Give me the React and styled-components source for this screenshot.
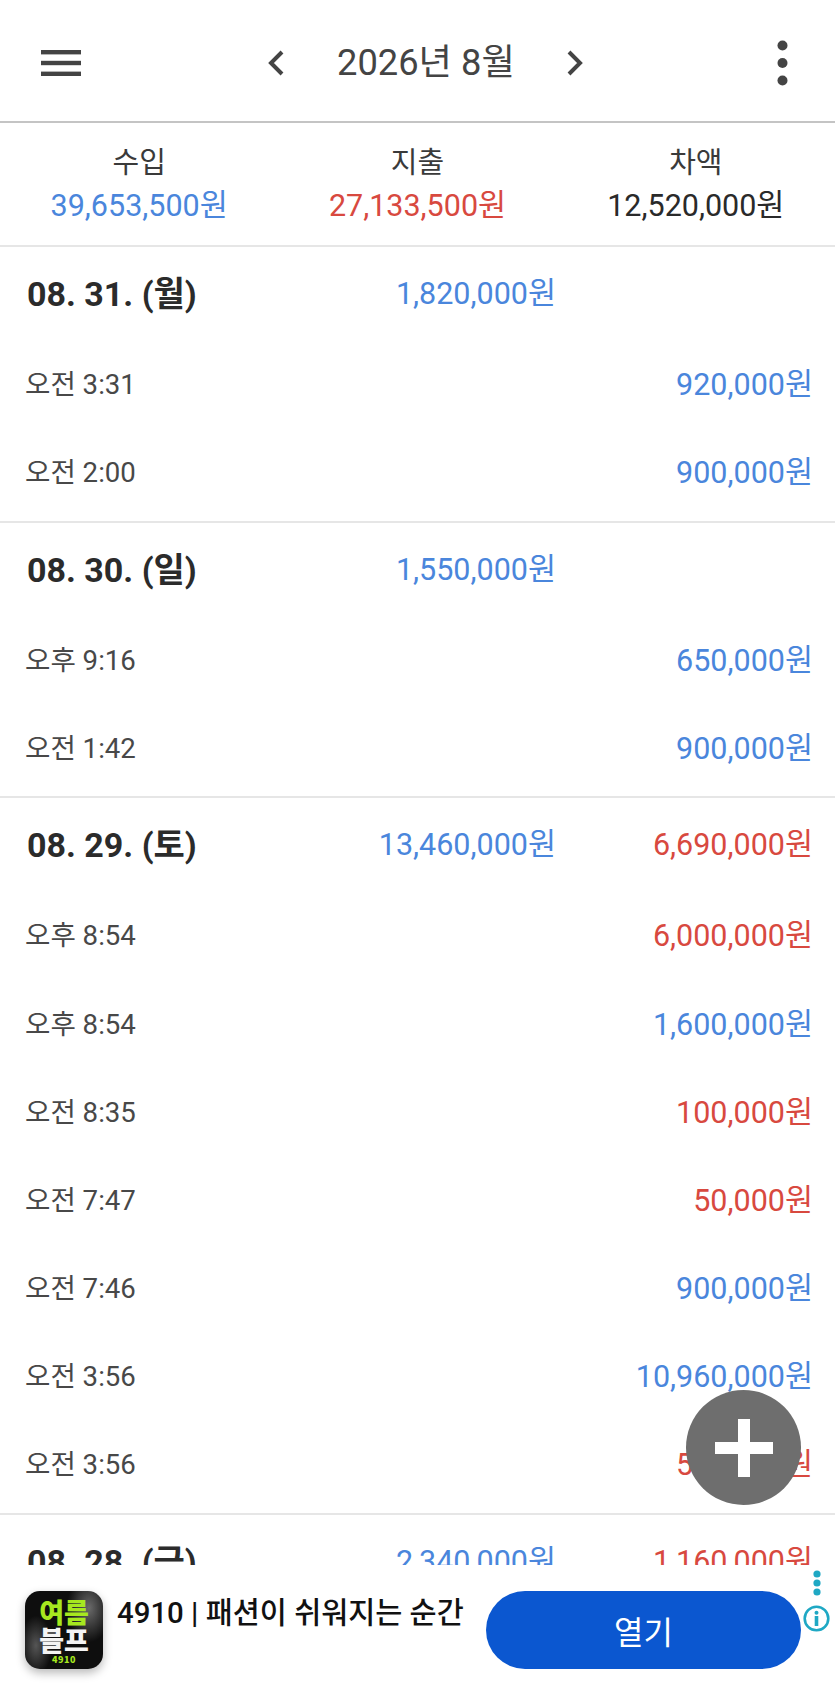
import React from 'react';
import styled, { createGlobalStyle } from 'styled-components';

const GlobalStyle = createGlobalStyle`
  html, body {
    margin: 0;
    padding: 0;
    background: #fff;
  }
  * {
    box-sizing: border-box;
  }
`;

const Screen = styled.div`
  position: relative;
  width: 835px;
  height: 1696px;
  display: flex;
  flex-direction: column;
  overflow: hidden;
  background: #fff;
  font-family: Roboto, "Noto Sans CJK KR", sans-serif;
`;

const Header = styled.header`
  flex: 0 0 123px;
  display: flex;
  align-items: center;
  justify-content: space-between;
  padding: 4px 47px 0 41px;
  border-bottom: 2px solid #c4c4c4;
`;

const IconBtn = styled.button`
  display: flex;
  padding: 0;
  border: none;
  background: none;
`;

const MonthNav = styled.div`
  display: flex;
  align-items: center;
  gap: 52px;
  margin-right: 7px;
`;

const MonthTitle = styled.div`
  width: 177px;
  font-size: 36.3px;
  line-height: 40px;
  color: #444;
  white-space: nowrap;
  text-align: center;
`;

const Summary = styled.section`
  flex: 0 0 124px;
  display: grid;
  grid-template-columns: repeat(3, 1fr);
  padding-top: 20px;
  border-bottom: 2px solid #e6e6e6;
`;

const SummaryCol = styled.div`
  display: flex;
  flex-direction: column;
  align-items: center;
  gap: 4px;
`;

const SummaryLabel = styled.div`
  font-size: 29px;
  line-height: 40px;
  color: #3a3a3a;
`;

const Amount = styled.div`
  font-size: 30.5px;
  line-height: 38px;
  white-space: nowrap;
  color: ${(p) => (p.$kind === 'in' ? '#4a86dc' : p.$kind === 'out' ? '#d8493f' : '#2a2a2a')};
`;

const List = styled.main`
  flex: 1;
  min-height: 0;
  overflow: hidden;
`;

const Day = styled.section`
  padding-bottom: 3.4px;
  border-bottom: 2px solid #e6e6e6;
`;

const DayHead = styled.div`
  height: 94px;
  padding: 0 22px 0 27px;
  display: grid;
  grid-template-columns: 1fr 272px 257px;
  align-items: center;
  justify-items: end;
`;

const DayDate = styled.div`
  justify-self: start;
  font-size: 34px;
  line-height: 38px;
  font-weight: 700;
  color: #2b2b2b;
  white-space: nowrap;
`;

const Row = styled.div`
  height: 88.15px;
  padding: 0 22px 0 25px;
  display: flex;
  align-items: center;
  justify-content: space-between;
`;

const Time = styled.div`
  font-size: 27.6px;
  line-height: 38px;
  color: #484848;
`;

const Fab = styled.button`
  position: absolute;
  left: 686px;
  top: 1390px;
  width: 115px;
  height: 115px;
  padding: 0;
  border: none;
  border-radius: 50%;
  background: #6e6e6e;
  display: flex;
  align-items: center;
  justify-content: center;
`;

const AdBar = styled.footer`
  position: relative;
  flex: 0 0 131px;
  display: flex;
  align-items: flex-start;
  padding: 26px 34px 0 25px;
  background: #fff;
`;

const AdIcon = styled.div`
  flex: 0 0 78px;
  height: 78px;
  padding-top: 7px;
  border-radius: 15px;
  background:
    radial-gradient(ellipse 22px 34px at 82% 22%, #6a6a6a 0, rgba(90, 90, 90, 0) 100%),
    radial-gradient(ellipse 16px 30px at 14% 70%, #555 0, rgba(80, 80, 80, 0) 100%),
    #0e0e0e;
  box-shadow: 0 4px 10px rgba(0, 0, 0, 0.28);
  display: flex;
  flex-direction: column;
  align-items: center;
  font-family: "Noto Sans CJK KR", sans-serif;
  font-weight: 900;
  overflow: hidden;
`;

const AdIconLine = styled.div`
  font-size: ${(p) => p.$size}px;
  line-height: ${(p) => p.$height}px;
  height: ${(p) => p.$height}px;
  color: ${(p) => p.$color};
  letter-spacing: ${(p) => p.$spacing || 0}px;
  white-space: nowrap;
`;

const AdTitle = styled.div`
  flex: 1;
  padding: 4px 0 0 14px;
  font-size: 29.4px;
  line-height: 36px;
  font-weight: 500;
  color: #111;
  white-space: nowrap;
`;

const OpenBtn = styled.button`
  flex: 0 0 315px;
  height: 78px;
  border: none;
  border-radius: 39px;
  background: #0b57d0;
  color: #fff;
  font-family: Roboto, "Noto Sans CJK KR", sans-serif;
  font-size: 32px;
`;

const AdChoices = styled.div`
  position: absolute;
  right: 5px;
  top: 5px;
  display: flex;
  flex-direction: column;
  align-items: center;
  gap: 9px;
`;

const days = [
  {
    date: '08. 31. (월)',
    income: '1,820,000원',
    rows: [
      ['오전 3:31', '920,000원', 'in'],
      ['오전 2:00', '900,000원', 'in'],
    ],
  },
  {
    date: '08. 30. (일)',
    income: '1,550,000원',
    rows: [
      ['오후 9:16', '650,000원', 'in'],
      ['오전 1:42', '900,000원', 'in'],
    ],
  },
  {
    date: '08. 29. (토)',
    income: '13,460,000원',
    expense: '6,690,000원',
    rows: [
      ['오후 8:54', '6,000,000원', 'out'],
      ['오후 8:54', '1,600,000원', 'in'],
      ['오전 8:35', '100,000원', 'out'],
      ['오전 7:47', '50,000원', 'out'],
      ['오전 7:46', '900,000원', 'in'],
      ['오전 3:56', '10,960,000원', 'in'],
      ['오전 3:56', '540,000원', 'out'],
    ],
  },
  {
    date: '08. 28. (금)',
    income: '2,340,000원',
    expense: '1,160,000원',
    rows: [],
  },
];

const summary = [
  ['수입', '39,653,500원', 'in'],
  ['지출', '27,133,500원', 'out'],
  ['차액', '12,520,000원', 'net'],
];

const App = () => {
  return (
    <Screen>
      <GlobalStyle />
      <Header>
        <IconBtn aria-label="menu">
          <svg width="40" height="26" viewBox="0 0 40 26" fill="#444">
            <rect width="40" height="4.4" />
            <rect y="10.8" width="40" height="4.4" />
            <rect y="21.6" width="40" height="4.4" />
          </svg>
        </IconBtn>
        <MonthNav>
          <IconBtn aria-label="previous">
            <svg width="18" height="26" viewBox="0 0 18 26" fill="none" stroke="#444" strokeWidth="4">
              <path d="M15 2 L4 13 L15 24" />
            </svg>
          </IconBtn>
          <MonthTitle>2026년 8월</MonthTitle>
          <IconBtn aria-label="next">
            <svg width="18" height="26" viewBox="0 0 18 26" fill="none" stroke="#444" strokeWidth="4">
              <path d="M3 2 L14 13 L3 24" />
            </svg>
          </IconBtn>
        </MonthNav>
        <IconBtn aria-label="more">
          <svg width="11" height="46" viewBox="0 0 11 46" fill="#444">
            <circle cx="5.5" cy="5.5" r="5" />
            <circle cx="5.5" cy="23" r="5" />
            <circle cx="5.5" cy="40.5" r="5" />
          </svg>
        </IconBtn>
      </Header>

      <Summary>
        {summary.map(([label, value, kind]) => (
          <SummaryCol key={label}>
            <SummaryLabel>{label}</SummaryLabel>
            <Amount $kind={kind}>{value}</Amount>
          </SummaryCol>
        ))}
      </Summary>

      <List>
        {days.map((d) => (
          <Day key={d.date}>
            <DayHead>
              <DayDate>{d.date}</DayDate>
              <Amount $kind="in">{d.income}</Amount>
              <Amount $kind="out">{d.expense}</Amount>
            </DayHead>
            {d.rows.map((r, i) => (
              <Row key={i}>
                <Time>{r[0]}</Time>
                <Amount $kind={r[2]}>{r[1]}</Amount>
              </Row>
            ))}
          </Day>
        ))}
      </List>

      <Fab aria-label="add">
        <svg width="58" height="58" viewBox="0 0 58 58" fill="#fff">
          <rect x="23" width="12" height="58" />
          <rect y="23" width="58" height="12" />
        </svg>
      </Fab>

      <AdBar>
        <AdIcon>
          <AdIconLine $size={27} $height={27} $color="#a6e81f">여름</AdIconLine>
          <AdIconLine $size={27} $height={29} $color="#f4f4f4">블프</AdIconLine>
          <AdIconLine $size={9} $height={11} $color="#a6e81f" $spacing={0.5}>4910</AdIconLine>
        </AdIcon>
        <AdTitle>4910 | 패션이 쉬워지는 순간</AdTitle>
        <OpenBtn>열기</OpenBtn>
        <AdChoices>
          <svg width="8" height="26" viewBox="0 0 8 26" fill="#1fa8c4">
            <circle cx="4" cy="4" r="3.6" />
            <circle cx="4" cy="13" r="3.6" />
            <circle cx="4" cy="22" r="3.6" />
          </svg>
          <svg width="27" height="27" viewBox="0 0 27 27" fill="none">
            <circle cx="13.5" cy="13.5" r="11.8" stroke="#1fa8c4" strokeWidth="2.6" />
            <circle cx="13.5" cy="7.8" r="2" fill="#1fa8c4" />
            <rect x="11.7" y="11" width="3.6" height="10" fill="#1fa8c4" />
          </svg>
        </AdChoices>
      </AdBar>
    </Screen>
  );
};

export default App;
